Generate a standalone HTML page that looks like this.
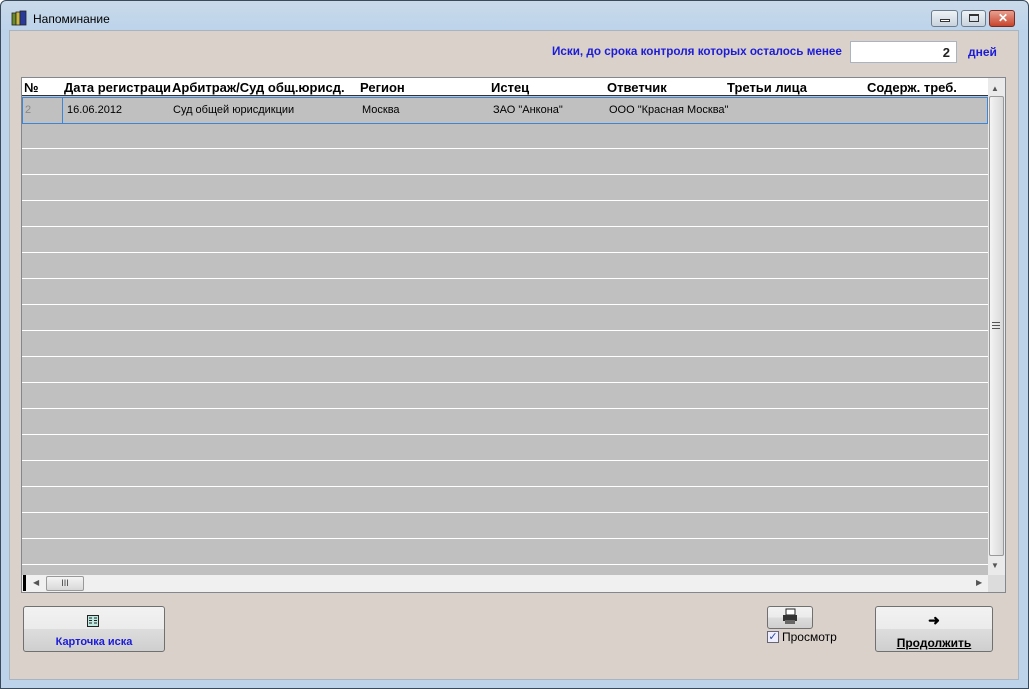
<!DOCTYPE html>
<html><head><meta charset="utf-8"><style>
*{margin:0;padding:0;box-sizing:border-box}
body{width:1029px;height:689px;overflow:hidden;font-family:"Liberation Sans",sans-serif;background:#fff}
.win{position:absolute;left:0;top:0;width:1029px;height:689px;border:1px solid #3a4a5a;border-radius:6px 6px 0 0;background:linear-gradient(#c9daea,#bcd3ea 30px,#bcd3ea)}
.client{position:absolute;left:9px;top:30px;width:1010px;height:650px;background:#d9d1ca;border:1px solid #a8b4c0}
.title{position:absolute;left:33px;top:12px;font-size:12px;color:#000}
.abs{position:absolute}
.cap{position:absolute;top:10px;height:17px;border:1px solid #6d7c8c;border-radius:3px;background:linear-gradient(#eef2f6,#c9d3dd)}
.hdr{position:absolute;top:80px;font-size:13px;font-weight:bold}
.cell{position:absolute;top:104px;font-size:11px}
.btn{position:absolute;border:1px solid #707070;border-radius:3px;background:linear-gradient(#f2f2f2 0,#ebebeb 50%,#dddddd 50%,#cfcfcf)}
</style></head><body>
<div class="win"></div>
<div class="client"></div>
<svg class="abs" style="left:11px;top:10px" width="18" height="16"><rect x="1" y="3" width="4" height="12" fill="#6a8a2a" stroke="#222" stroke-width=".8"/><rect x="5" y="2" width="4" height="13" fill="#c8b840" stroke="#222" stroke-width=".8"/><rect x="9" y="1" width="6" height="14" fill="#2a3a9a" stroke="#222" stroke-width=".8"/></svg>
<div class="title">Напоминание</div>
<div class="cap" style="left:931px;width:27px"><div class="abs" style="left:8px;top:8px;width:10px;height:3px;border:1px solid #333;background:#fff"></div></div>
<div class="cap" style="left:961px;width:25px"><div class="abs" style="left:7px;top:3px;width:10px;height:8px;border:1px solid #333;border-top-width:2px"></div></div>
<div class="cap" style="left:989px;width:26px;background:linear-gradient(#e8a090,#c8442c);border-color:#7a2a20"><div class="abs" style="left:8px;top:0px;color:#fff;font-weight:bold;font-size:12px">✕</div></div>

<div class="abs" style="left:552px;top:45px;font-size:11.7px;font-weight:bold;color:#1c1cd8">Иски, до срока контроля которых осталось менее</div>
<div class="abs" style="left:850px;top:41px;width:107px;height:22px;background:#fff;border:1px solid #aab4c0;font-size:13px;font-weight:bold;text-align:right;padding:3px 6px 0 0;color:#222">2</div>
<div class="abs" style="left:968px;top:45px;font-size:12px;font-weight:bold;color:#1c1cd8">дней</div>

<div class="abs" style="left:21px;top:77px;width:985px;height:516px;border:1px solid #828790;background:#c0c0c0"></div>
<div class="abs" style="left:22px;top:78px;width:966px;height:18px;background:#fff;border-bottom:1px solid #333"></div>
<div class="abs" style="left:22px;top:97px;width:966px;height:478px;background:repeating-linear-gradient(#c0c0c0 0,#c0c0c0 25px,#fff 25px,#fff 26px)"></div>
<div class="abs" style="left:22px;top:97px;width:966px;height:27px;border:1px solid #3b86d8;background:#c0c0c0"></div>
<div class="abs" style="left:22px;top:97px;width:41px;height:27px;border:1px solid #3b86d8"></div>
<div class="hdr" style="left:24px">№</div>
<div class="hdr" style="left:64px">Дата регистраци</div>
<div class="hdr" style="left:172px">Арбитраж/Суд общ.юрисд.</div>
<div class="hdr" style="left:360px">Регион</div>
<div class="hdr" style="left:491px">Истец</div>
<div class="hdr" style="left:607px">Ответчик</div>
<div class="hdr" style="left:727px">Третьи лица</div>
<div class="hdr" style="left:867px">Содерж. треб.</div>
<div class="cell" style="left:25px;color:#888">2</div>
<div class="cell" style="left:67px">16.06.2012</div>
<div class="cell" style="left:173px">Суд общей юрисдикции</div>
<div class="cell" style="left:362px">Москва</div>
<div class="cell" style="left:493px">ЗАО "Анкона"</div>
<div class="cell" style="left:609px">ООО "Красная Москва"</div>

<div class="abs" style="left:988px;top:78px;width:17px;height:497px;background:#eaeaea"></div>
<div class="abs" style="left:991px;top:84px;font-size:8px;color:#555">▲</div>
<div class="abs" style="left:991px;top:561px;font-size:8px;color:#555">▼</div>
<div class="abs" style="left:989px;top:96px;width:15px;height:460px;border:1px solid #999;border-radius:2px;background:linear-gradient(90deg,#f4f4f4,#d8d8d8)"></div>
<div class="abs" style="left:992px;top:322px;width:8px;height:7px;border-top:1px solid #555;border-bottom:1px solid #555"><div style="margin-top:2px;height:1px;background:#555"></div></div>
<div class="abs" style="left:22px;top:575px;width:966px;height:17px;background:#f0f0f0"></div>
<div class="abs" style="left:988px;top:575px;width:17px;height:17px;background:#dcdcdc"></div>
<div class="abs" style="left:23px;top:575px;width:3px;height:16px;background:#000"></div>
<div class="abs" style="left:33px;top:578px;font-size:8px;color:#555">◀</div>
<div class="abs" style="left:976px;top:578px;font-size:8px;color:#555">▶</div>
<div class="abs" style="left:46px;top:576px;width:38px;height:15px;border:1px solid #999;border-radius:2px;background:linear-gradient(#f4f4f4,#d8d8d8);font-size:9px;text-align:center;line-height:13px;color:#444">III</div>

<div class="btn" style="left:23px;top:606px;width:142px;height:46px"></div>
<svg class="abs" style="left:87px;top:615px" width="12" height="12"><rect x=".5" y=".5" width="11" height="11" fill="#bfe8e0" stroke="#222"/><path d="M2 3h3M2 5.5h3M2 8h3M7 3h3M7 5.5h3M7 8h3" stroke="#222"/></svg>
<div class="abs" style="left:23px;top:636px;width:142px;text-align:center;font-size:11px;font-weight:bold;color:#1c1cd8">Карточка иска</div>

<div class="btn" style="left:767px;top:606px;width:46px;height:23px"></div>
<svg class="abs" style="left:781px;top:608px" width="18" height="17"><rect x="5" y="1" width="9" height="6" fill="#fff" stroke="#222"/><path d="M2 7h14v6H2z" fill="#333"/><rect x="4" y="12" width="10" height="4" fill="#666"/></svg>
<div class="abs" style="left:767px;top:631px;width:12px;height:12px;border:1px solid #667;background:#eef;font-size:11px;line-height:10px;text-align:center;color:#2a4aa0">✓</div>
<div class="abs" style="left:782px;top:630px;font-size:12px">Просмотр</div>

<div class="btn" style="left:875px;top:606px;width:118px;height:46px"></div>
<div class="abs" style="left:875px;top:612px;width:118px;text-align:center;font-size:14px;font-weight:bold">➜</div>
<div class="abs" style="left:875px;top:636px;width:118px;text-align:center;font-size:12px;font-weight:bold;text-decoration:underline">Продолжить</div>
</body></html>
